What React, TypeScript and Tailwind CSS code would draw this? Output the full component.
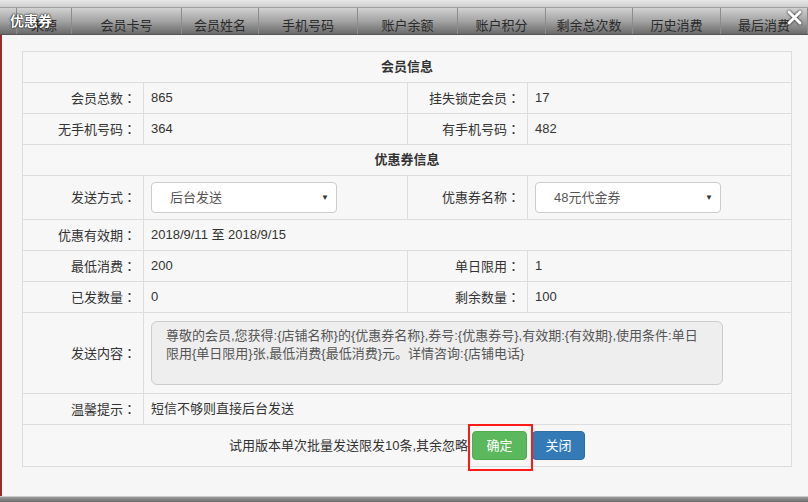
import { ReactNode } from "react";

// Columns of the list header that sits behind the dialog
const headerCols = [
  { title: "", w: 17 },
  { title: "来源", w: 55 },
  { title: "会员卡号", w: 110 },
  { title: "会员姓名", w: 77 },
  { title: "手机号码", w: 99 },
  { title: "账户余额", w: 100 },
  { title: "账户积分", w: 88 },
  { title: "剩余总次数", w: 87 },
  { title: "历史消费", w: 88 },
  { title: "最后消费", w: 87 },
];

const font = "font-['Liberation_Sans','Noto_Sans_CJK_SC',sans-serif]";

// label cell, the colon is taken from the TC face so it sits centered like the original
function Label({ children }: { children: ReactNode }) {
  return (
    <td className="border border-[#dddddd] text-right pr-[7px] text-[#333]">
      {children}
      <span className="font-['Noto_Sans_CJK_TC',sans-serif]">：</span>
    </td>
  );
}

function Value({ children, colSpan }: { children?: ReactNode; colSpan?: number }) {
  return (
    <td colSpan={colSpan} className="border border-[#dddddd] pl-[7px] text-[#333]">
      {children}
    </td>
  );
}

function SectionRow({ title }: { title: string }) {
  return (
    <tr className="h-[31px]">
      <td colSpan={4} className="border border-[#dddddd] text-center font-bold text-[#333]">
        {title}
      </td>
    </tr>
  );
}

function FakeSelect({ value }: { value: string }) {
  return (
    <div className="relative flex items-center w-[186px] h-[31px] bg-white border border-[#cccccc] rounded-[4px] pl-[18px] text-[#555]">
      {value}
      <span className="absolute right-[7px] top-[9px] text-[8px] text-[#333]">▼</span>
    </div>
  );
}

export default function App() {
  return (
    <div className={`w-[808px] h-[502px] overflow-hidden flex flex-col bg-[#dcdcdc] text-[13px] ${font}`}>
      {/* title bar over the list header */}
      <div className="h-[8px] bg-gradient-to-b from-[#e6e6e6] to-[#cfcfcf] border-b border-[#a0a0a0]" />
      <div className="relative h-[27px] flex bg-gradient-to-b from-[#d2d2d2] via-[#a4a4a4] to-[#6a6a6a] border-b border-[#555]">
        {headerCols.map((c, i) => (
          <div
            key={i}
            style={{ width: c.w }}
            className="shrink-0 flex items-center justify-center pt-[10px] text-[13px] text-[#2a2a2a] border-r border-[#8c8c8c] whitespace-nowrap"
          >
            {c.title}
          </div>
        ))}
        <div className="absolute left-[10px] top-[3px] text-[14px] font-bold text-white [text-shadow:0_0_2px_#000,0_0_1px_#000]">
          优惠券
        </div>
        <svg className="absolute left-[786px] top-[1px] drop-shadow-[0_0_1px_#000]" width="17" height="17" viewBox="0 0 17 17">
          <path d="M3 3 L14 14 M14 3 L3 14" stroke="#ffffff" strokeWidth="3" strokeLinecap="round" />
        </svg>
      </div>

      {/* dialog body */}
      <div className="flex h-[461px]">
        <div className="w-[2px] bg-[#9b2c2c]" />
        <div className="flex-1 bg-[#f6f6f6] pt-[16px] pl-[20px]">
          <table className="w-[769px] table-fixed border-collapse bg-[#f7f7f7]">
            <colgroup>
              <col className="w-[121px]" />
              <col className="w-[264px]" />
              <col className="w-[120px]" />
              <col className="w-[264px]" />
            </colgroup>
            <tbody>
              <SectionRow title="会员信息" />
              <tr className="h-[31px]">
                <Label>会员总数</Label>
                <Value>865</Value>
                <Label>挂失锁定会员</Label>
                <Value>17</Value>
              </tr>
              <tr className="h-[31px]">
                <Label>无手机号码</Label>
                <Value>364</Value>
                <Label>有手机号码</Label>
                <Value>482</Value>
              </tr>
              <SectionRow title="优惠券信息" />
              <tr className="h-[44px]">
                <Label>发送方式</Label>
                <Value>
                  <FakeSelect value="后台发送" />
                </Value>
                <Label>优惠券名称</Label>
                <Value>
                  <FakeSelect value="48元代金券" />
                </Value>
              </tr>
              <tr className="h-[31px]">
                <Label>优惠有效期</Label>
                <Value colSpan={3}>2018/9/11 至 2018/9/15</Value>
              </tr>
              <tr className="h-[31px]">
                <Label>最低消费</Label>
                <Value>200</Value>
                <Label>单日限用</Label>
                <Value>1</Value>
              </tr>
              <tr className="h-[31px]">
                <Label>已发数量</Label>
                <Value>0</Value>
                <Label>剩余数量</Label>
                <Value>100</Value>
              </tr>
              <tr className="h-[81px]">
                <Label>发送内容</Label>
                <Value colSpan={3}>
                  <div className="w-[572px] h-[64px] bg-[#eeeeee] border border-[#cccccc] rounded-[6px] pl-[14px] pt-[5px] leading-[18px] text-[#555]">
                    尊敬的会员,您获得:{"{店铺名称}"}的{"{优惠券名称}"},券号:{"{优惠券号}"},有效期:{"{有效期}"},使用条件:单日
                    <br />
                    限用{"{单日限用}"}张,最低消费{"{最低消费}"}元。详情咨询:{"{店铺电话}"}
                  </div>
                </Value>
              </tr>
              <tr className="h-[31px]">
                <Label>温馨提示</Label>
                <Value colSpan={3}>短信不够则直接后台发送</Value>
              </tr>
              <tr className="h-[42px]">
                <td colSpan={4} className="border border-[#dddddd]">
                  <div className="flex items-center justify-center text-[#333]">
                    <span>试用版本单次批量发送限发10条,其余忽略</span>
                    <span className="relative ml-[4px]">
                      <button className="w-[55px] h-[29px] rounded-[4px] bg-[#5cb85c] border border-[#4cae4c] text-white text-[13px]">
                        确定
                      </button>
                      <span className="absolute left-[-4px] right-[-6px] top-[-7px] bottom-[-11px] border-2 border-[#ff1a1a]" />
                    </span>
                    <button className="ml-[5px] w-[53px] h-[29px] rounded-[4px] bg-[#337ab7] border border-[#2e6da4] text-white text-[13px]">
                      关闭
                    </button>
                  </div>
                </td>
              </tr>
            </tbody>
          </table>
        </div>
      </div>

      {/* list header peeking under the dialog */}
      <div className="flex-1 border-t border-[#c8c8c8] bg-gradient-to-b from-[#9a9a9a] to-[#6c6c6c]" />
    </div>
  );
}
